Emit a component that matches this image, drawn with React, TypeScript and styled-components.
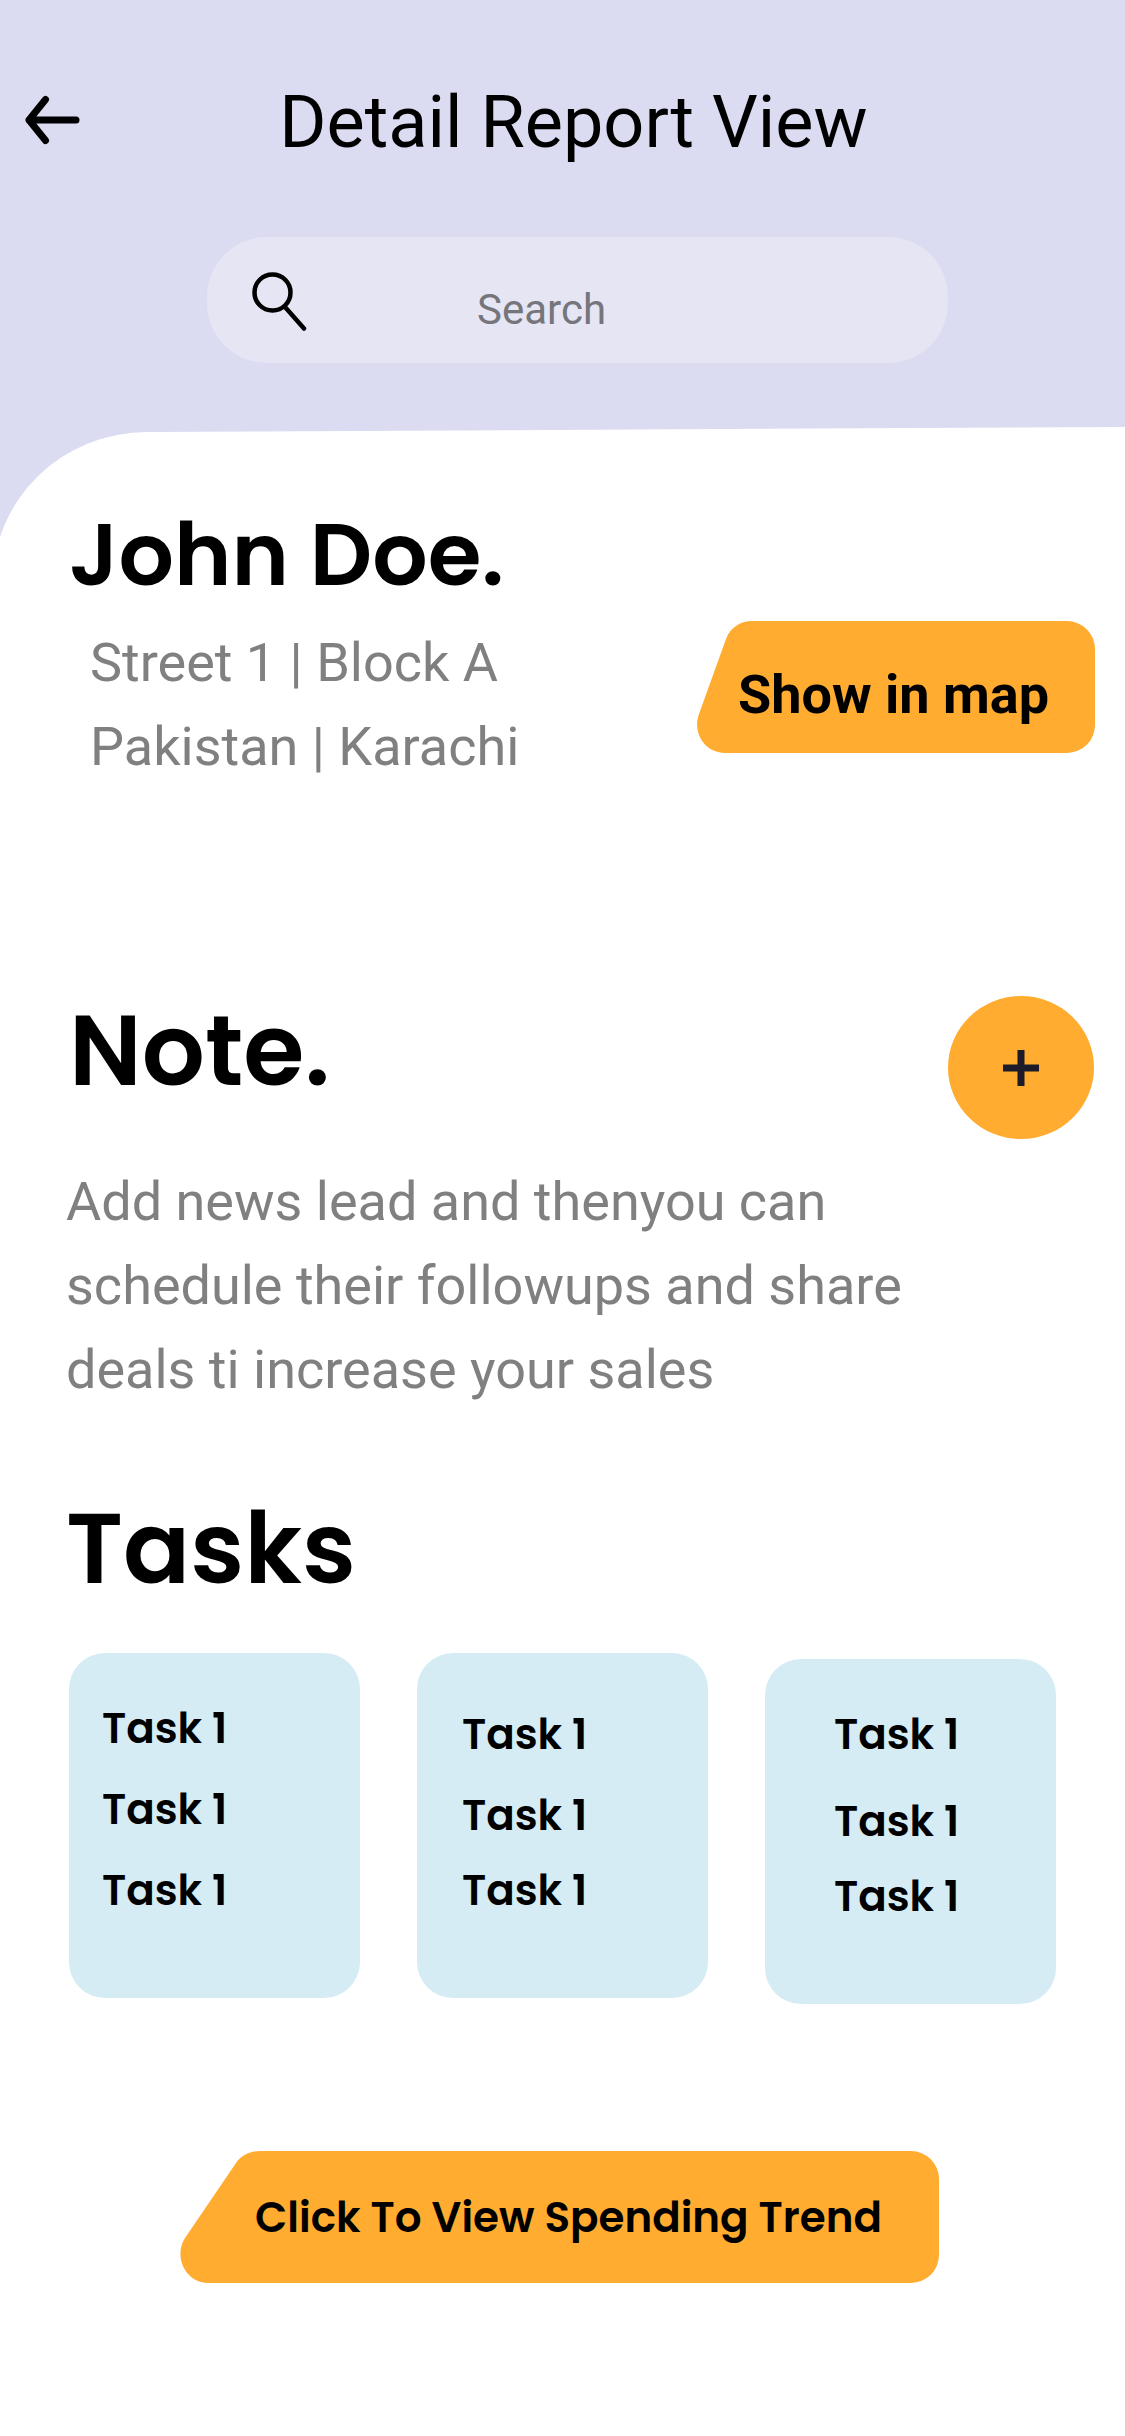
import React from "react";
import styled, { createGlobalStyle } from "styled-components";

const colors = {
  lavender: "#dbdbf1",
  field: "#e6e5f3",
  amber: "#ffac30",
  sky: "#d5ecf4",
  ink: "#000000",
  muted: "#808080",
};

const body = `Roboto, "Noto Sans", sans-serif`;
const display = `Poppins, Inter, "Noto Sans", sans-serif`;

const GlobalStyle = createGlobalStyle`
  *, *::before, *::after { box-sizing: border-box; }
  body { margin: 0; background: #ffffff; }
  h1, h2, p, ul { margin: 0; padding: 0; }
  button, input { font: inherit; color: inherit; border: 0; padding: 0; }
  button { cursor: pointer; }
`;

const Page = styled.div`
  min-height: 100vh;
  font-family: ${body};
  color: ${colors.ink};
  background: #ffffff;
`;

const Backdrop = styled.div`
  background: ${colors.lavender};
`;

const Header = styled.header`
  padding: 81px 0 64px;
`;

const TitleBar = styled.div`
  display: flex;
  align-items: center;
  padding: 0 58px 0 24px;
`;

const BackButton = styled.button`
  display: block;
  width: 56px;
  height: 56px;
  background: none;
`;

const Title = styled.h1`
  flex: 1;
  text-align: center;
  font-size: 72px;
  line-height: 84px;
  font-weight: 400;
`;

const SearchBox = styled.label`
  display: flex;
  align-items: flex-start;
  margin: 72px 177px 0 207px;
  height: 126px;
  padding: 34px 45px 0;
  border-radius: 60px;
  background: ${colors.field};
`;

const SearchInput = styled.input`
  flex: 1;
  min-width: 0;
  margin-left: 169px;
  padding-top: 15px;
  font-size: 42px;
  line-height: 48px;
  background: none;
  outline: none;
  &::placeholder { color: #75757c; opacity: 1; }
`;

/* Shallow slope that lifts the sheet's top edge toward the right. */
const SheetSlope = styled.div`
  height: 5px;
  margin-left: 147px;
  background: #ffffff;
  clip-path: polygon(0 100%, 100% 0, 100% 100%);
`;

const Sheet = styled.main`
  margin-left: -7px;
  padding: 78px 0 150px 7px;
  border-top-left-radius: 154px 150px;
  background: #ffffff;
`;

const Heading = styled.h2<{ $small?: boolean }>`
  font-family: ${display};
  font-size: ${(p) => (p.$small ? 87 : 99)}px;
  line-height: ${(p) => (p.$small ? 90 : 96)}px;
  font-weight: 600;
`;

const Copy = styled.p`
  font-size: 54px;
  line-height: 84px;
  color: ${colors.muted};
`;

const Contact = styled.section`
  padding: 0 30px 0 69px;
`;

const ContactRow = styled.div`
  display: flex;
  justify-content: space-between;
  align-items: flex-start;
  margin-top: 21px;
  padding-left: 21px;
`;

const MapButton = styled.button`
  width: 398px;
  height: 132px;
  padding: 15px 5px 0 0;
  font-size: 54px;
  line-height: 63px;
  font-weight: 700;
  background: ${colors.amber};
  clip-path: path("M55 0 H370 A28 28 0 0 1 398 28 V104 A28 28 0 0 1 370 132 H28 C8 132 -5 112 2 93 L29 18 C33 7 43 0 55 0 Z");
`;

const Note = styled.section`
  margin-top: 207px;
  padding: 0 31px 0 66px;
`;

const NoteHead = styled.div`
  display: flex;
  justify-content: space-between;
  align-items: flex-start;
  padding-left: 3px;
  margin-bottom: 21px;
`;

const NoteTitle = styled(Heading)`
  padding-top: 7px;
`;

const AddButton = styled.button`
  display: grid;
  place-items: center;
  width: 146px;
  height: 143px;
  border-radius: 50%;
  background: ${colors.amber};
`;

const NoteText = styled(Copy)`
  max-width: 900px;
`;

const Tasks = styled.section`
  margin-top: 89px;
  padding: 0 69px 0 66px;
`;

const CardGrid = styled.div`
  display: grid;
  grid-template-columns: repeat(3, 1fr);
  gap: 57px;
  align-items: start;
  margin-top: 56px;
  padding-left: 3px;
`;

const Card = styled.ul<{ $drop: number; $top: number; $inset: number }>`
  list-style: none;
  min-height: 345px;
  margin-top: ${(p) => p.$drop}px;
  padding: ${(p) => p.$top}px 0 0 ${(p) => p.$inset}px;
  border-radius: 36px;
  background: ${colors.sky};
`;

const Task = styled.li<{ $gap: number }>`
  margin-top: ${(p) => p.$gap}px;
  font-family: ${display};
  font-size: 42px;
  line-height: 63px;
  font-weight: 600;
`;

const Footer = styled.div`
  display: flex;
  justify-content: center;
  margin-top: 147px;
  padding-right: 6px;
`;

const TrendButton = styled.button`
  width: 759px;
  height: 132px;
  padding-left: 18px;
  font-family: ${display};
  font-size: 42px;
  line-height: 63px;
  font-weight: 600;
  background: ${colors.amber};
  clip-path: path("M80 0 H731 A28 28 0 0 1 759 28 V104 A28 28 0 0 1 731 132 H28 C6 132 -7 106 5 87 L56 12 C61 4 71 0 80 0 Z");
`;

const cards = [
  { drop: 0, top: 44, inset: 33, gaps: [0, 18, 18] },
  { drop: 0, top: 50, inset: 45, gaps: [0, 18, 12] },
  { drop: 6, top: 44, inset: 69, gaps: [0, 24, 12] },
];

const BackIcon = () => (
  <svg width="56" height="56" viewBox="0 0 56 56" fill="none" stroke="#000" strokeWidth="7" strokeLinecap="round" strokeLinejoin="round" aria-hidden="true">
    <path d="M52 25H5M21.500 4.500 5 25l16.500 20.500" />
  </svg>
);

const SearchIcon = () => (
  <svg width="56" height="60" viewBox="0 0 56 60" fill="none" stroke="#000" strokeWidth="4.500" strokeLinecap="round" aria-hidden="true">
    <circle cx="20.500" cy="21.500" r="18" />
    <path d="M33 36 52 57.500" />
  </svg>
);

const PlusIcon = () => (
  <svg width="38" height="38" viewBox="0 0 38 38" stroke="#1d1b29" strokeWidth="7" aria-hidden="true">
    <path d="M19 1v36M1 19h36" />
  </svg>
);

export default function App() {
  return (
    <Page>
      <GlobalStyle />
      <Backdrop>
        <Header>
          <TitleBar>
            <BackButton type="button" aria-label="Back">
              <BackIcon />
            </BackButton>
            <Title>Detail Report View</Title>
          </TitleBar>
          <SearchBox>
            <SearchIcon />
            <SearchInput type="text" placeholder="Search" aria-label="Search" />
          </SearchBox>
        </Header>
        <SheetSlope />
        <Sheet>
          <Contact>
            <Heading $small>John Doe.</Heading>
            <ContactRow>
              <Copy>
                Street 1 | Block A
                <br />
                Pakistan | Karachi
              </Copy>
              <MapButton type="button">Show in map</MapButton>
            </ContactRow>
          </Contact>
          <Note>
            <NoteHead>
              <NoteTitle>Note.</NoteTitle>
              <AddButton type="button" aria-label="Add note">
                <PlusIcon />
              </AddButton>
            </NoteHead>
            <NoteText>Add news lead and thenyou can schedule their followups and share deals ti increase your sales</NoteText>
          </Note>
          <Tasks>
            <Heading>Tasks</Heading>
            <CardGrid>
              {cards.map((card, i) => (
                <Card key={i} $drop={card.drop} $top={card.top} $inset={card.inset}>
                  {card.gaps.map((gap, j) => (
                    <Task key={j} $gap={gap}>Task 1</Task>
                  ))}
                </Card>
              ))}
            </CardGrid>
          </Tasks>
          <Footer>
            <TrendButton type="button">Click To View Spending Trend</TrendButton>
          </Footer>
        </Sheet>
      </Backdrop>
    </Page>
  );
}
